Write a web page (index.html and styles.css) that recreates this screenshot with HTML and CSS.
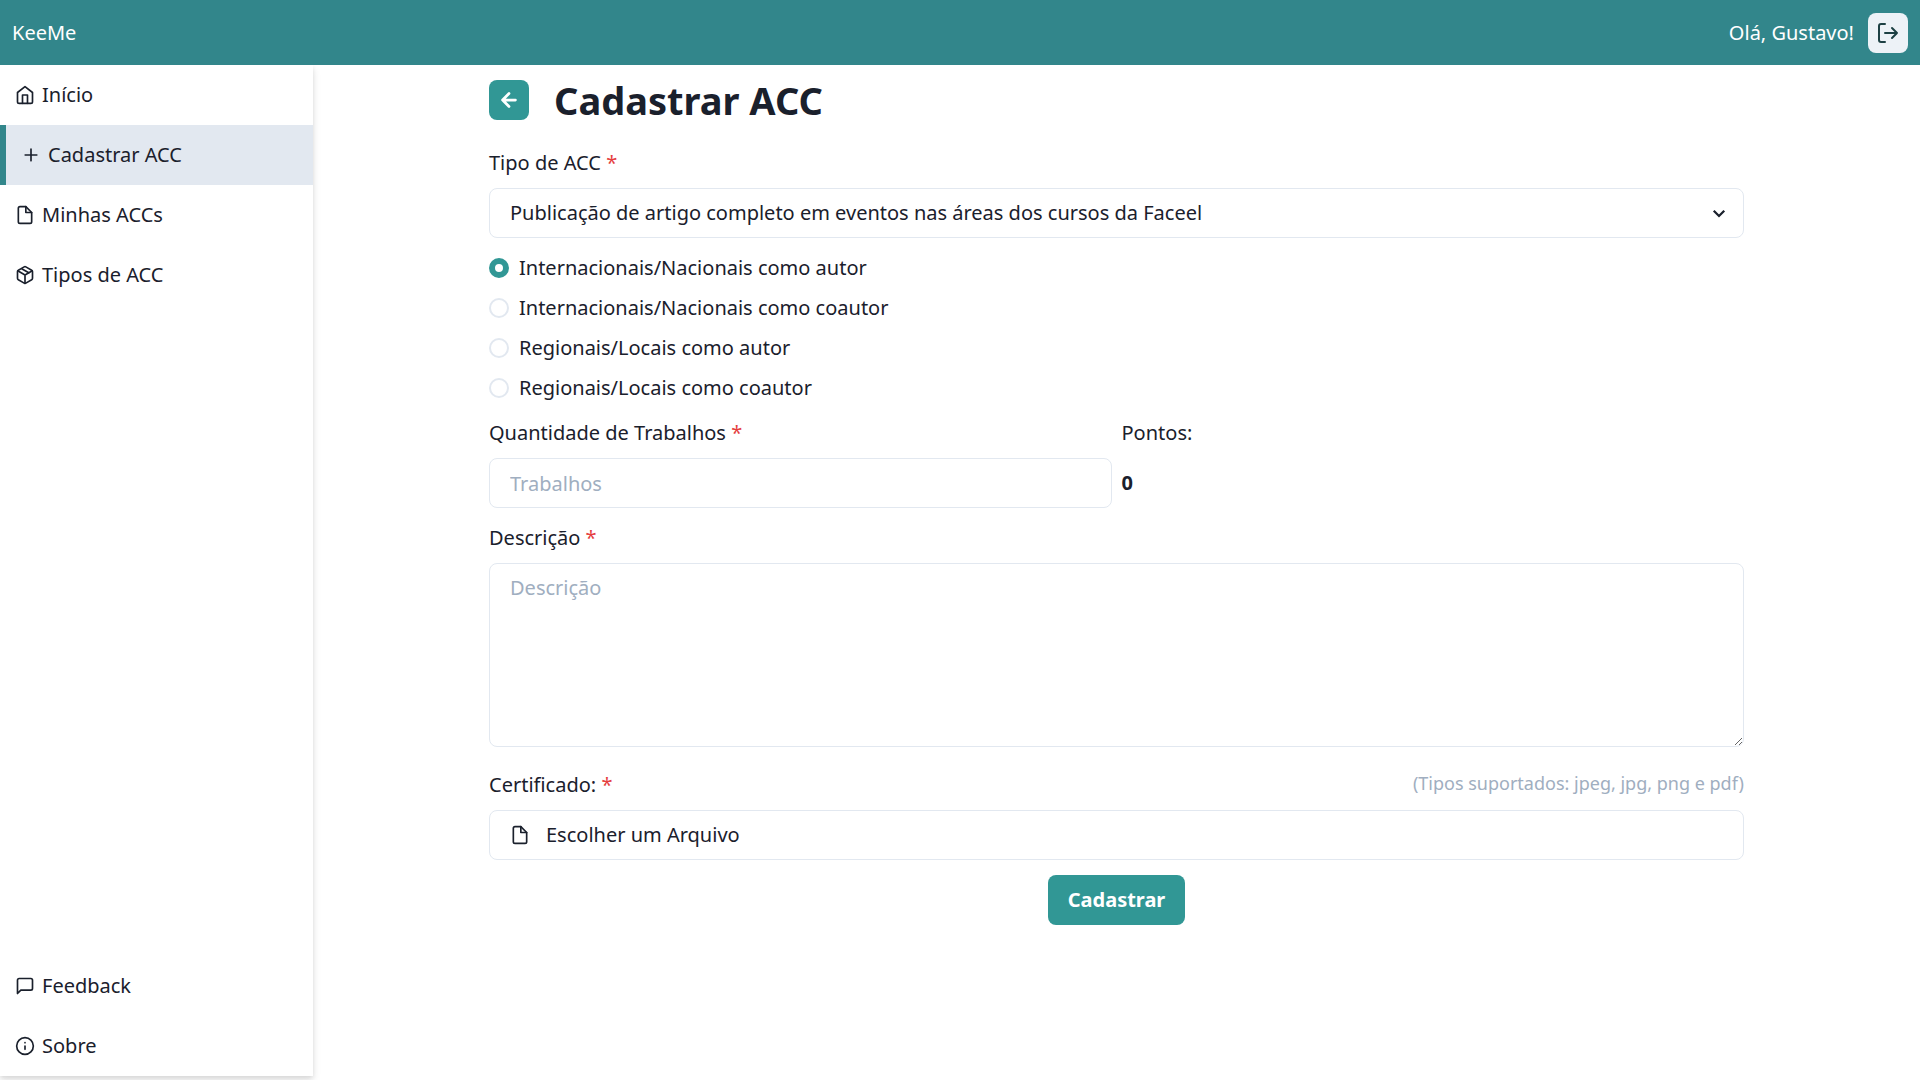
FILE: index.html
```html
<!DOCTYPE html>
<html lang="pt-BR">
<head>
<meta charset="utf-8">
<meta name="viewport" content="width=device-width, initial-scale=1">
<title>KeeMe - Cadastrar ACC</title>
<link rel="stylesheet" href="styles.css">
</head>
<body>
<header class="topbar">
  <span>KeeMe</span>
  <div class="user">
    <span>Olá, Gustavo!</span>
    <button class="icon-button logout" type="button" aria-label="Sair">
      <svg class="icon icon-large" viewBox="0 0 24 24"><path d="M9 21H5a2 2 0 0 1-2-2V5a2 2 0 0 1 2-2h4"/><path d="M16 17l5-5-5-5M21 12H9"/></svg>
    </button>
  </div>
</header>
<div class="layout">
  <nav class="sidebar">
    <div>
      <a class="nav-link" href="#"><svg class="icon" viewBox="0 0 24 24"><path d="M3 9l9-7 9 7v11a2 2 0 0 1-2 2H5a2 2 0 0 1-2-2z"/><path d="M9 22V12h6v10"/></svg>Início</a>
      <a class="nav-link active" href="#" aria-current="page"><svg class="icon" viewBox="0 0 24 24"><path d="M12 5v14M5 12h14"/></svg>Cadastrar ACC</a>
      <a class="nav-link" href="#"><svg class="icon" viewBox="0 0 24 24"><path d="M13 2H6a2 2 0 0 0-2 2v16a2 2 0 0 0 2 2h12a2 2 0 0 0 2-2V9z"/><path d="M13 2v7h7"/></svg>Minhas ACCs</a>
      <a class="nav-link" href="#"><svg class="icon" viewBox="0 0 24 24"><path d="M16.5 9.4l-9-5.19M21 16V8a2 2 0 0 0-1-1.73l-7-4a2 2 0 0 0-2 0l-7 4A2 2 0 0 0 3 8v8a2 2 0 0 0 1 1.73l7 4a2 2 0 0 0 2 0l7-4A2 2 0 0 0 21 16z"/><path d="M3.27 6.96L12 12.01l8.73-5.05M12 22.08V12"/></svg>Tipos de ACC</a>
    </div>
    <div>
      <a class="nav-link" href="#"><svg class="icon" viewBox="0 0 24 24"><path d="M21 15a2 2 0 0 1-2 2H7l-4 4V5a2 2 0 0 1 2-2h14a2 2 0 0 1 2 2z"/></svg>Feedback</a>
      <a class="nav-link" href="#"><svg class="icon" viewBox="0 0 24 24"><circle cx="12" cy="12" r="10"/><path d="M12 16v-4M12 8h.01"/></svg>Sobre</a>
    </div>
  </nav>
  <main class="content">
    <form class="form">
      <div class="heading">
        <button class="icon-button back" type="button" aria-label="Voltar">
          <svg class="icon icon-medium" viewBox="0 0 24 24"><path d="M19 12H5M12 19l-7-7 7-7"/></svg>
        </button>
        <h1>Cadastrar ACC</h1>
      </div>
      <div class="field">
        <label for="tipo">Tipo de ACC <span class="required">*</span></label>
        <div class="select-wrap">
          <select class="control" id="tipo">
            <option>Publicação de artigo completo em eventos nas áreas dos cursos da Faceel</option>
          </select>
          <svg class="icon chevron" viewBox="0 0 24 24"><path d="M5 9l7 7 7-7"/></svg>
        </div>
      </div>
      <div class="radios" role="radiogroup" aria-label="Modalidade">
        <label class="radio"><input type="radio" name="modalidade" checked>Internacionais/Nacionais como autor</label>
        <label class="radio"><input type="radio" name="modalidade">Internacionais/Nacionais como coautor</label>
        <label class="radio"><input type="radio" name="modalidade">Regionais/Locais como autor</label>
        <label class="radio"><input type="radio" name="modalidade">Regionais/Locais como coautor</label>
      </div>
      <div class="columns">
        <div class="field">
          <label for="quantidade">Quantidade de Trabalhos <span class="required">*</span></label>
          <input class="control" id="quantidade" type="text" inputmode="numeric" placeholder="Trabalhos">
        </div>
        <div class="field">
          <span>Pontos:</span>
          <output class="points" for="quantidade">0</output>
        </div>
      </div>
      <div class="field">
        <label for="descricao">Descrição <span class="required">*</span></label>
        <textarea class="control description" id="descricao" placeholder="Descrição"></textarea>
      </div>
      <div class="field certificate">
        <div class="label-row">
          <label for="arquivo">Certificado: <span class="required">*</span></label>
          <span class="hint">(Tipos suportados: jpeg, jpg, png e pdf)</span>
        </div>
        <label class="control file">
          <svg class="icon" viewBox="0 0 24 24"><path d="M13 2H6a2 2 0 0 0-2 2v16a2 2 0 0 0 2 2h12a2 2 0 0 0 2-2V9z"/><path d="M13 2v7h7"/></svg>
          Escolher um Arquivo
          <input class="file-input" id="arquivo" type="file" accept=".jpeg,.jpg,.png,.pdf">
        </label>
      </div>
      <button class="submit" type="submit">Cadastrar</button>
    </form>
  </main>
</div>
</body>
</html>
```
FILE: styles.css
```css
* {
  box-sizing: border-box;
}

body {
  margin: 0;
  font: 20px/30px "Noto Sans", sans-serif;
  color: #1a202c;
  background: #fff;
}

button,
input,
select,
textarea {
  font: inherit;
  color: inherit;
}

.icon {
  flex: none;
  width: 20px;
  height: 20px;
  fill: none;
  stroke: currentColor;
  stroke-width: 2;
  stroke-linecap: round;
  stroke-linejoin: round;
}

.icon-medium {
  width: 22px;
  height: 22px;
}

.icon-large {
  width: 24px;
  height: 24px;
}

.topbar {
  position: relative;
  z-index: 1;
  display: flex;
  align-items: center;
  justify-content: space-between;
  height: 65px;
  padding: 0 12px;
  color: #fff;
  background: #32868b;
}

.user {
  display: flex;
  align-items: center;
  gap: 14px;
}

.icon-button {
  display: flex;
  align-items: center;
  justify-content: center;
  flex: none;
  width: 40px;
  height: 40px;
  padding: 0;
  border: 0;
  border-radius: 8px;
  cursor: pointer;
}

.logout {
  color: #1d4044;
  background: #edf2f7;
}

.back {
  color: #fff;
  background: #319795;
}

.back .icon {
  stroke-width: 3;
}

.layout {
  display: flex;
  align-items: flex-start;
  min-height: calc(100vh - 65px);
}

.sidebar {
  display: flex;
  flex: none;
  flex-direction: column;
  justify-content: space-between;
  width: 313px;
  min-height: calc(100vh - 69px);
  box-shadow: 0 4px 8px rgba(0, 0, 0, 0.12), 0 2px 4px rgba(0, 0, 0, 0.06);
}

.nav-link {
  display: flex;
  align-items: center;
  gap: 7px;
  height: 60px;
  padding: 0 15px;
  color: inherit;
  text-decoration: none;
}

.nav-link.active {
  border-left: 6px solid #32868b;
  background: #e2e8f0;
}

.content {
  flex: 1;
  min-width: 0;
  padding: 12px 16px;
}

.form {
  display: flex;
  flex-direction: column;
  gap: 15px;
  max-width: 1255px;
  margin: 0 auto;
}

.heading {
  display: flex;
  align-items: center;
  gap: 25px;
  margin-bottom: 10px;
}

h1 {
  margin: 0;
  font-size: 38px;
  line-height: 46px;
  font-weight: 700;
}

.field {
  display: flex;
  flex-direction: column;
  gap: 10px;
}

.required {
  color: #e53e3e;
}

.control {
  width: 100%;
  height: 50px;
  padding: 0 20px;
  border: 1px solid #e2e8f0;
  border-radius: 8px;
  background: #fff;
}

.control::placeholder {
  color: #a0aec0;
  opacity: 1;
}

.select-wrap {
  position: relative;
}

select.control {
  display: block;
  appearance: none;
}

.chevron {
  position: absolute;
  top: 15px;
  right: 16px;
  stroke-linecap: butt;
  stroke-linejoin: miter;
  stroke-width: 3;
  width: 18px;
  pointer-events: none;
}

.radios {
  display: flex;
  flex-direction: column;
  gap: 10px;
}

.radio {
  display: flex;
  align-items: center;
  gap: 10px;
}

.radio input {
  appearance: none;
  width: 20px;
  height: 20px;
  margin: 0;
  border: 2px solid #e2e8f0;
  border-radius: 50%;
}

.radio input:checked {
  border: 6px solid #319795;
}

.columns {
  display: grid;
  grid-template-columns: 1fr 1fr;
  gap: 10px;
}

.points {
  font-weight: 700;
  line-height: 50px;
}

.description {
  height: 184px;
  padding: 9px 20px;
  resize: vertical;
}

.certificate {
  margin-top: 8px;
}

.label-row {
  display: flex;
  justify-content: space-between;
}

.hint {
  font-size: 18px;
  line-height: 27px;
  color: #a0aec0;
}

.file {
  position: relative;
  display: flex;
  align-items: center;
  gap: 16px;
  cursor: pointer;
}

.file-input {
  position: absolute;
  inset: 0;
  opacity: 0;
  cursor: pointer;
}

.submit {
  align-self: center;
  height: 50px;
  padding: 0 20px;
  border: 0;
  border-radius: 8px;
  font-weight: 700;
  color: #fff;
  background: #319795;
  cursor: pointer;
}

@media (max-width: 800px) {
  .layout {
    flex-direction: column;
  }

  .sidebar {
    width: 100%;
    min-height: 0;
  }

  .content {
    width: 100%;
  }
}
```
